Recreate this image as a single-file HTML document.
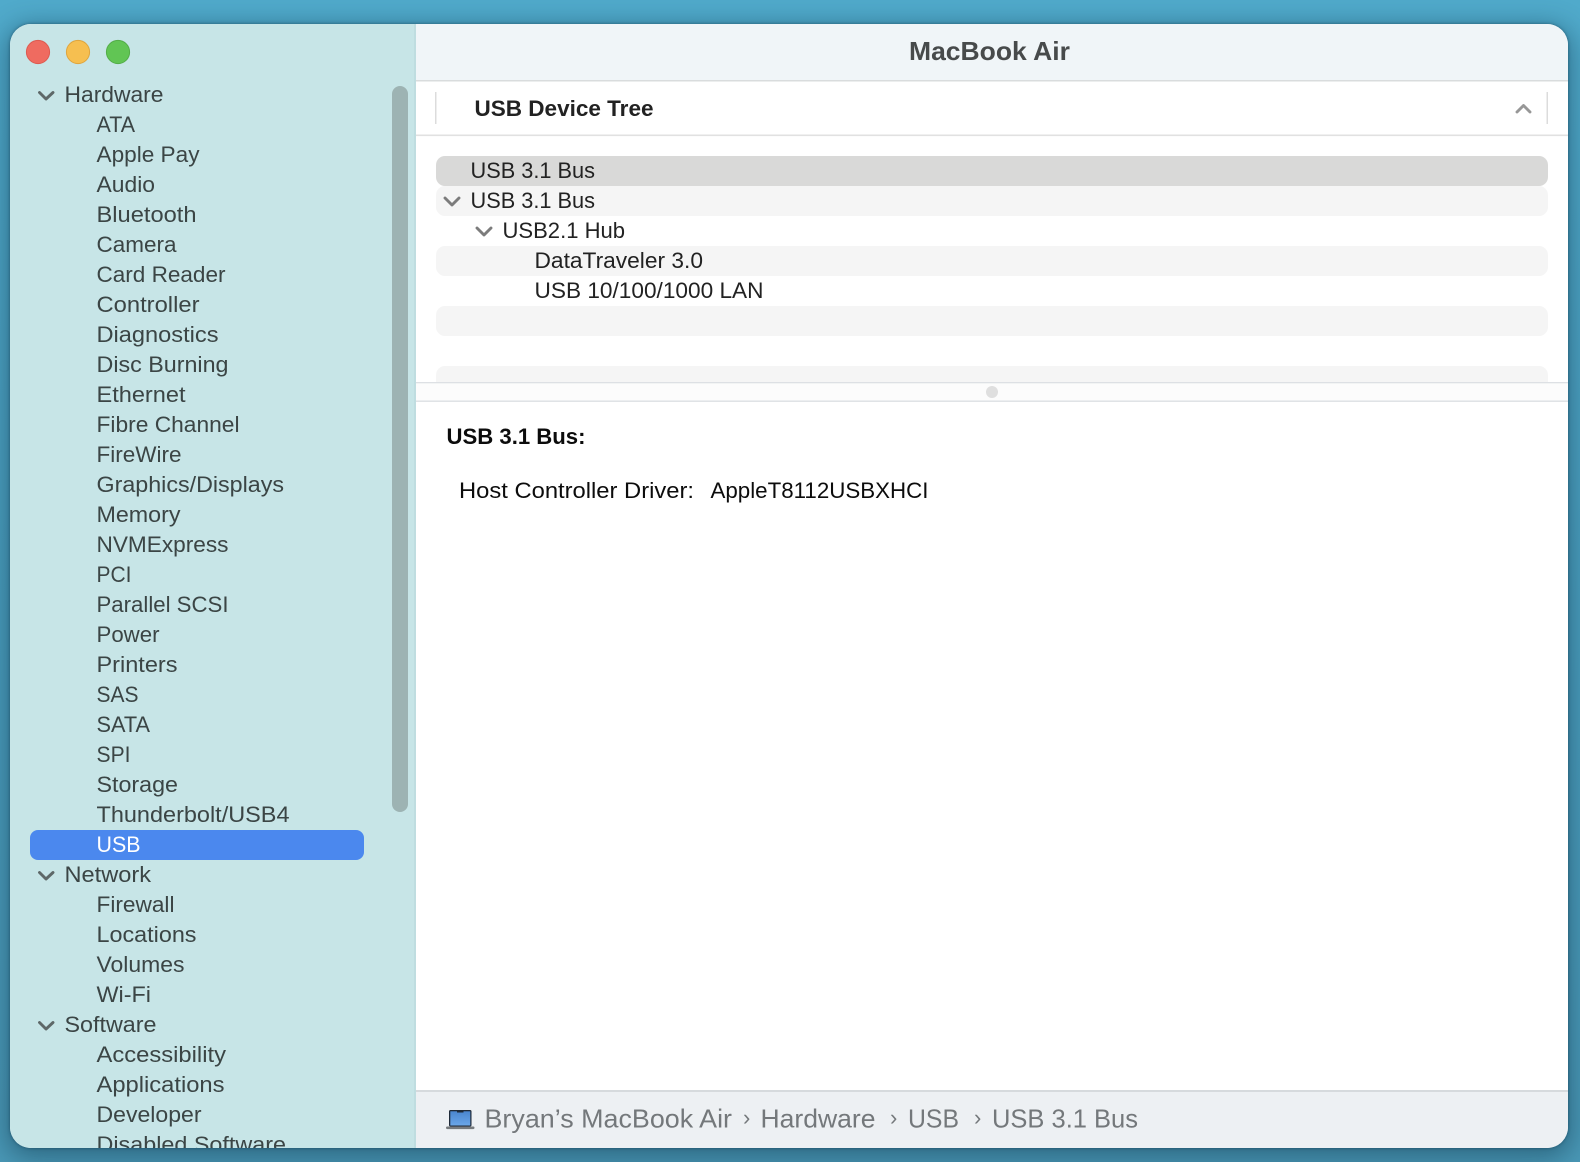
<!DOCTYPE html>
<html><head><meta charset="utf-8"><title>MacBook Air</title>
<style>
html,body{margin:0;padding:0;width:1580px;height:1162px;overflow:hidden}
body{position:relative;background:linear-gradient(180deg,#50aacb 0%,#4b9fbf 50%,#4a98b6 100%)}
#shadow{position:absolute;left:10px;top:24px;width:1558px;height:1124px;border-radius:21px;box-shadow:0 6px 26px 4px rgba(8,40,60,.42),0 0 3px rgba(8,40,60,.5)}
svg{position:absolute;left:0;top:0}
text{font-family:"Liberation Sans",sans-serif}
.s{font-size:22.5px;fill:#3b4545}
.t{font-size:22.5px;fill:#222}
.d{font-size:22.5px;fill:#0c0c0c}
.b{font-size:26px;fill:#74787b}
.c{fill:none;stroke:#5e6868;stroke-width:2.9;stroke-linecap:round;stroke-linejoin:round}
.c2{fill:none;stroke:#7c7c7c;stroke-width:2.9;stroke-linecap:round;stroke-linejoin:round}
</style></head><body>
<div id="shadow"></div>
<svg width="1580" height="1162" viewBox="0 0 1580 1162" xmlns="http://www.w3.org/2000/svg">
<defs><clipPath id="w"><rect x="10" y="24" width="1558" height="1124" rx="21"/></clipPath>
<clipPath id="tree"><rect x="416" y="136" width="1152" height="246"/></clipPath>
<linearGradient id="scr" x1="0" y1="0" x2="0" y2="1"><stop offset="0" stop-color="#4a86cf"/><stop offset="1" stop-color="#6aa6e8"/></linearGradient></defs>
<g clip-path="url(#w)">
<rect x="10" y="24" width="1558" height="1124" fill="#fff"/>
<!-- title bar -->
<rect x="416" y="24" width="1152" height="57" fill="#f0f5f8"/>
<rect x="416" y="80" width="1152" height="1.5" fill="#d9dcdd"/>
<text x="909" y="60" font-size="26" font-weight="700" fill="#474a4b" textLength="161" lengthAdjust="spacingAndGlyphs">MacBook Air</text>
<!-- column header -->
<rect x="435" y="92" width="1.5" height="32" fill="#dcdcdc"/>
<rect x="1546.5" y="92" width="1.5" height="32" fill="#dcdcdc"/>
<text x="474.5" y="116" font-size="22.5" font-weight="700" fill="#222" textLength="179" lengthAdjust="spacingAndGlyphs">USB Device Tree</text>
<path d="M1517 112L1523.5 105.5L1530 112" fill="none" stroke="#979797" stroke-width="2.9" stroke-linecap="round" stroke-linejoin="round"/>
<rect x="416" y="134.5" width="1152" height="1.6" fill="#e1e1e1"/>
<!-- tree -->
<g clip-path="url(#tree)">
<rect x="436" y="186" width="1112" height="30" rx="9" fill="#f5f5f5"/>
<rect x="436" y="246" width="1112" height="30" rx="9" fill="#f5f5f5"/>
<rect x="436" y="306" width="1112" height="30" rx="9" fill="#f5f5f5"/>
<rect x="436" y="366" width="1112" height="30" rx="9" fill="#f5f5f5"/>
<rect x="436" y="156" width="1112" height="30" rx="9" fill="#d9d9d8"/>
</g>
<text class="t" x="470.5" y="178" textLength="124.5" lengthAdjust="spacingAndGlyphs">USB 3.1 Bus</text>
<path class="c2" d="M445 198L452 205L459 198"/>
<text class="t" x="470.5" y="208" textLength="124.5" lengthAdjust="spacingAndGlyphs">USB 3.1 Bus</text>
<path class="c2" d="M477 228L484 235L491 228"/>
<text class="t" x="502.5" y="238" textLength="122.5" lengthAdjust="spacingAndGlyphs">USB2.1 Hub</text>
<text class="t" x="534.5" y="268" textLength="168.5" lengthAdjust="spacingAndGlyphs">DataTraveler 3.0</text>
<text class="t" x="534.5" y="298" textLength="229" lengthAdjust="spacingAndGlyphs">USB 10/100/1000 LAN</text>
<!-- splitter -->
<rect x="416" y="382" width="1152" height="1.4" fill="#dde0e4"/>
<rect x="416" y="383.4" width="1152" height="17" fill="#fcfcfc"/>
<rect x="416" y="400.5" width="1152" height="1.4" fill="#dde0e4"/>
<circle cx="992" cy="392" r="6" fill="#dfdfdf"/>
<!-- detail -->
<text x="446.5" y="444" font-size="22.5" font-weight="700" fill="#0c0c0c" textLength="139" lengthAdjust="spacingAndGlyphs">USB 3.1 Bus:</text>
<text class="d" x="459" y="498" textLength="235" lengthAdjust="spacingAndGlyphs">Host Controller Driver:</text>
<text class="d" x="710.5" y="498" textLength="218" lengthAdjust="spacingAndGlyphs">AppleT8112USBXHCI</text>
<!-- bottom bar -->
<rect x="416" y="1090" width="1152" height="58" fill="#edf0f3"/>
<rect x="416" y="1090" width="1152" height="2" fill="#d6dadd"/>
<rect x="449" y="1110" width="22.5" height="16.5" rx="1.5" fill="#1f2a38"/>
<rect x="450.3" y="1111.3" width="20" height="14.2" fill="url(#scr)"/>
<rect x="457" y="1110.5" width="6.5" height="2" fill="#1f2a38"/>
<rect x="446" y="1126.5" width="28.5" height="2.6" rx="1.2" fill="#777b7e"/>
<text class="b" x="484.5" y="1127.5" textLength="247.5" lengthAdjust="spacingAndGlyphs">Bryan’s MacBook Air</text>
<text class="b" x="743" y="1125" style="font-size:22px">›</text>
<text class="b" x="760.5" y="1127.5" textLength="115" lengthAdjust="spacingAndGlyphs">Hardware</text>
<text class="b" x="890" y="1125" style="font-size:22px">›</text>
<text class="b" x="908" y="1127.5" textLength="51" lengthAdjust="spacingAndGlyphs">USB</text>
<text class="b" x="974" y="1125" style="font-size:22px">›</text>
<text class="b" x="992" y="1127.5" textLength="146" lengthAdjust="spacingAndGlyphs">USB 3.1 Bus</text>
<!-- sidebar -->
<rect x="10" y="24" width="406" height="1124" fill="#c7e5e7"/>
<rect x="414" y="24" width="2" height="1124" fill="#bfdde0"/>
<circle cx="38" cy="52" r="11.6" fill="#ef6b60" stroke="#dd5a50" stroke-width="1"/>
<circle cx="78" cy="52" r="11.6" fill="#f6bf50" stroke="#dfa53e" stroke-width="1"/>
<circle cx="118" cy="52" r="11.6" fill="#61c554" stroke="#53ad48" stroke-width="1"/>
<rect x="392" y="86" width="16" height="726" rx="8" fill="#9db3b3"/>
<rect x="30" y="830" width="334" height="30" rx="8" fill="#4b88ee"/>
<path class="c" d="M39.5 92.5L46 99L53 92.5"/>
<path class="c" d="M39.5 872.5L46 879L53 872.5"/>
<path class="c" d="M39.5 1022.5L46 1029L53 1022.5"/>
<text class="s" x="64.5" y="102" textLength="99" lengthAdjust="spacingAndGlyphs">Hardware</text>
<text class="s" x="96.5" y="132" textLength="38.5" lengthAdjust="spacingAndGlyphs">ATA</text>
<text class="s" x="96.5" y="162" textLength="103" lengthAdjust="spacingAndGlyphs">Apple Pay</text>
<text class="s" x="96.5" y="192" textLength="58.5" lengthAdjust="spacingAndGlyphs">Audio</text>
<text class="s" x="96.5" y="222" textLength="100" lengthAdjust="spacingAndGlyphs">Bluetooth</text>
<text class="s" x="96.5" y="252" textLength="80" lengthAdjust="spacingAndGlyphs">Camera</text>
<text class="s" x="96.5" y="282" textLength="129" lengthAdjust="spacingAndGlyphs">Card Reader</text>
<text class="s" x="96.5" y="312" textLength="103" lengthAdjust="spacingAndGlyphs">Controller</text>
<text class="s" x="96.5" y="342" textLength="122" lengthAdjust="spacingAndGlyphs">Diagnostics</text>
<text class="s" x="96.5" y="372" textLength="132" lengthAdjust="spacingAndGlyphs">Disc Burning</text>
<text class="s" x="96.5" y="402" textLength="89" lengthAdjust="spacingAndGlyphs">Ethernet</text>
<text class="s" x="96.5" y="432" textLength="143" lengthAdjust="spacingAndGlyphs">Fibre Channel</text>
<text class="s" x="96.5" y="462" textLength="85" lengthAdjust="spacingAndGlyphs">FireWire</text>
<text class="s" x="96.5" y="492" textLength="187.5" lengthAdjust="spacingAndGlyphs">Graphics/Displays</text>
<text class="s" x="96.5" y="522" textLength="84" lengthAdjust="spacingAndGlyphs">Memory</text>
<text class="s" x="96.5" y="552" textLength="132" lengthAdjust="spacingAndGlyphs">NVMExpress</text>
<text class="s" x="96.5" y="582" textLength="35" lengthAdjust="spacingAndGlyphs">PCI</text>
<text class="s" x="96.5" y="612" textLength="132" lengthAdjust="spacingAndGlyphs">Parallel SCSI</text>
<text class="s" x="96.5" y="642" textLength="63" lengthAdjust="spacingAndGlyphs">Power</text>
<text class="s" x="96.5" y="672" textLength="81" lengthAdjust="spacingAndGlyphs">Printers</text>
<text class="s" x="96.5" y="702" textLength="42" lengthAdjust="spacingAndGlyphs">SAS</text>
<text class="s" x="96.5" y="732" textLength="53.5" lengthAdjust="spacingAndGlyphs">SATA</text>
<text class="s" x="96.5" y="762" textLength="34" lengthAdjust="spacingAndGlyphs">SPI</text>
<text class="s" x="96.5" y="792" textLength="81.5" lengthAdjust="spacingAndGlyphs">Storage</text>
<text class="s" x="96.5" y="822" textLength="193" lengthAdjust="spacingAndGlyphs">Thunderbolt/USB4</text>
<text class="s" x="96.5" y="852" textLength="44" lengthAdjust="spacingAndGlyphs" style="fill:#fff">USB</text>
<text class="s" x="64.5" y="882" textLength="86.5" lengthAdjust="spacingAndGlyphs">Network</text>
<text class="s" x="96.5" y="912" textLength="78" lengthAdjust="spacingAndGlyphs">Firewall</text>
<text class="s" x="96.5" y="942" textLength="100" lengthAdjust="spacingAndGlyphs">Locations</text>
<text class="s" x="96.5" y="972" textLength="88" lengthAdjust="spacingAndGlyphs">Volumes</text>
<text class="s" x="96.5" y="1002" textLength="54.5" lengthAdjust="spacingAndGlyphs">Wi-Fi</text>
<text class="s" x="64.5" y="1032" textLength="92" lengthAdjust="spacingAndGlyphs">Software</text>
<text class="s" x="96.5" y="1062" textLength="129.5" lengthAdjust="spacingAndGlyphs">Accessibility</text>
<text class="s" x="96.5" y="1092" textLength="128" lengthAdjust="spacingAndGlyphs">Applications</text>
<text class="s" x="96.5" y="1122" textLength="105" lengthAdjust="spacingAndGlyphs">Developer</text>
<text class="s" x="96.5" y="1152" textLength="189.5" lengthAdjust="spacingAndGlyphs">Disabled Software</text>
</g>
</svg>
</body></html>
